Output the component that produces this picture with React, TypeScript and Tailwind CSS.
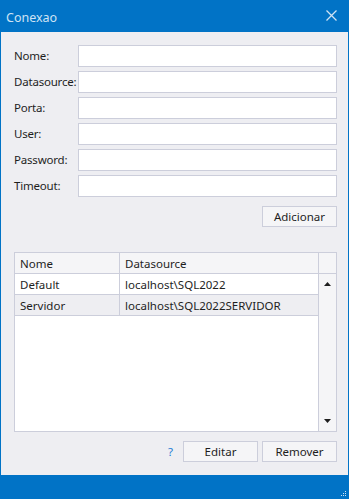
const fields = ['Nome:', 'Datasource:', 'Porta:', 'User:', 'Password:', 'Timeout:']

const rows = [
  { nome: 'Default', ds: 'localhost\\SQL2022' },
  { nome: 'Servidor', ds: 'localhost\\SQL2022SERVIDOR' },
]

export default function App() {
  return (
    <div
      className="flex flex-col w-[349px] h-[499px] bg-[#0173C6] text-[11.5px] text-[#1E1E1E]"
      style={{ fontFamily: '"Segoe UI", "Noto Sans", "Open Sans", sans-serif' }}
    >
      {/* title bar */}
      <div className="flex items-center justify-between h-[32px] pl-[6px] pr-[12px] shrink-0">
        <span className="text-[12.5px] text-[#CFE3F4] pt-[4px]">Conexao</span>
        <svg width="11" height="11" viewBox="0 0 11 11" className="mt-[-2px]">
          <path d="M0.5 0.5 L10.5 10.5 M10.5 0.5 L0.5 10.5" stroke="#CFE3F4" strokeWidth="1.3" />
        </svg>
      </div>

      {/* body */}
      <div className="flex-1 flex flex-col bg-[#EEEEF2] mx-[1px] pt-[13px] pl-[13px] pr-[11px]">
        <div className="flex flex-col gap-[4px]">
          {fields.map(f => (
            <div key={f} className="flex items-center h-[22px]">
              <label className="w-[64px] shrink-0 whitespace-nowrap tracking-[-0.2px]">{f}</label>
              <input className="flex-1 h-[22px] bg-white border border-[#CCCEDB] outline-none" />
            </div>
          ))}
        </div>

        <div className="flex justify-end mt-[9px]">
          <button className="w-[75px] h-[21px] bg-[#F5F5F7] border border-[#CCCEDB]">Adicionar</button>
        </div>

        {/* grid */}
        <div className="flex mt-[25px] h-[180px] border border-[#CCCEDB] bg-white">
          <div className="flex-1 flex flex-col">
            <div className="flex h-[21px] bg-[#F5F5F7] border-b border-[#CCCEDB]">
              <div className="w-[105px] px-[5px] pt-[1px] flex items-center border-r border-[#CCCEDB]">Nome</div>
              <div className="flex-1 px-[5px] pt-[1px] flex items-center">Datasource</div>
            </div>
            {rows.map((r, i) => (
              <div key={r.nome} className={`flex h-[21px] border-b border-[#CCCEDB] ${i === 1 ? 'bg-[#EEEEF2]' : 'bg-white'}`}>
                <div className="w-[105px] px-[5px] pt-[1px] flex items-center border-r border-[#CCCEDB]">{r.nome}</div>
                <div className="flex-1 px-[5px] pt-[1px] flex items-center">{r.ds}</div>
              </div>
            ))}
          </div>
          <div className="w-[18px] flex flex-col border-l border-[#CCCEDB] bg-[#F5F5F7]">
            <div className="h-[21px] border-b border-[#CCCEDB]" />
            <div className="flex justify-center pt-[8px]">
              <svg width="7" height="4" viewBox="0 0 7 4"><path d="M3.5 0 L7 4 L0 4 Z" fill="#1E1E1E" /></svg>
            </div>
            <div className="flex-1" />
            <div className="flex justify-center pb-[8px]">
              <svg width="7" height="4" viewBox="0 0 7 4"><path d="M0 0 L7 0 L3.5 4 Z" fill="#1E1E1E" /></svg>
            </div>
          </div>
        </div>

        {/* actions */}
        <div className="flex justify-end items-center gap-[4px] mt-[9px]">
          <span className="text-[#1C7CD5] mr-[6px]">?</span>
          <button className="w-[75px] h-[21px] bg-[#F5F5F7] border border-[#CCCEDB]">Editar</button>
          <button className="w-[75px] h-[21px] bg-[#F5F5F7] border border-[#CCCEDB]">Remover</button>
        </div>
        <div className="h-[13px]" />
      </div>

      {/* status bar */}
      <div className="h-[24px] shrink-0 flex justify-end items-end pr-[2px] pb-[2px]">
        <svg width="6" height="6" viewBox="0 0 6 6">
          <rect x="4" y="0" width="1" height="1" fill="#CFE3F4" />
          <rect x="2" y="2" width="1" height="1" fill="#CFE3F4" />
          <rect x="4" y="2" width="1" height="1" fill="#CFE3F4" />
          <rect x="0" y="4" width="1" height="1" fill="#CFE3F4" />
          <rect x="2" y="4" width="1" height="1" fill="#CFE3F4" />
          <rect x="4" y="4" width="1" height="1" fill="#CFE3F4" />
        </svg>
      </div>
    </div>
  )
}
